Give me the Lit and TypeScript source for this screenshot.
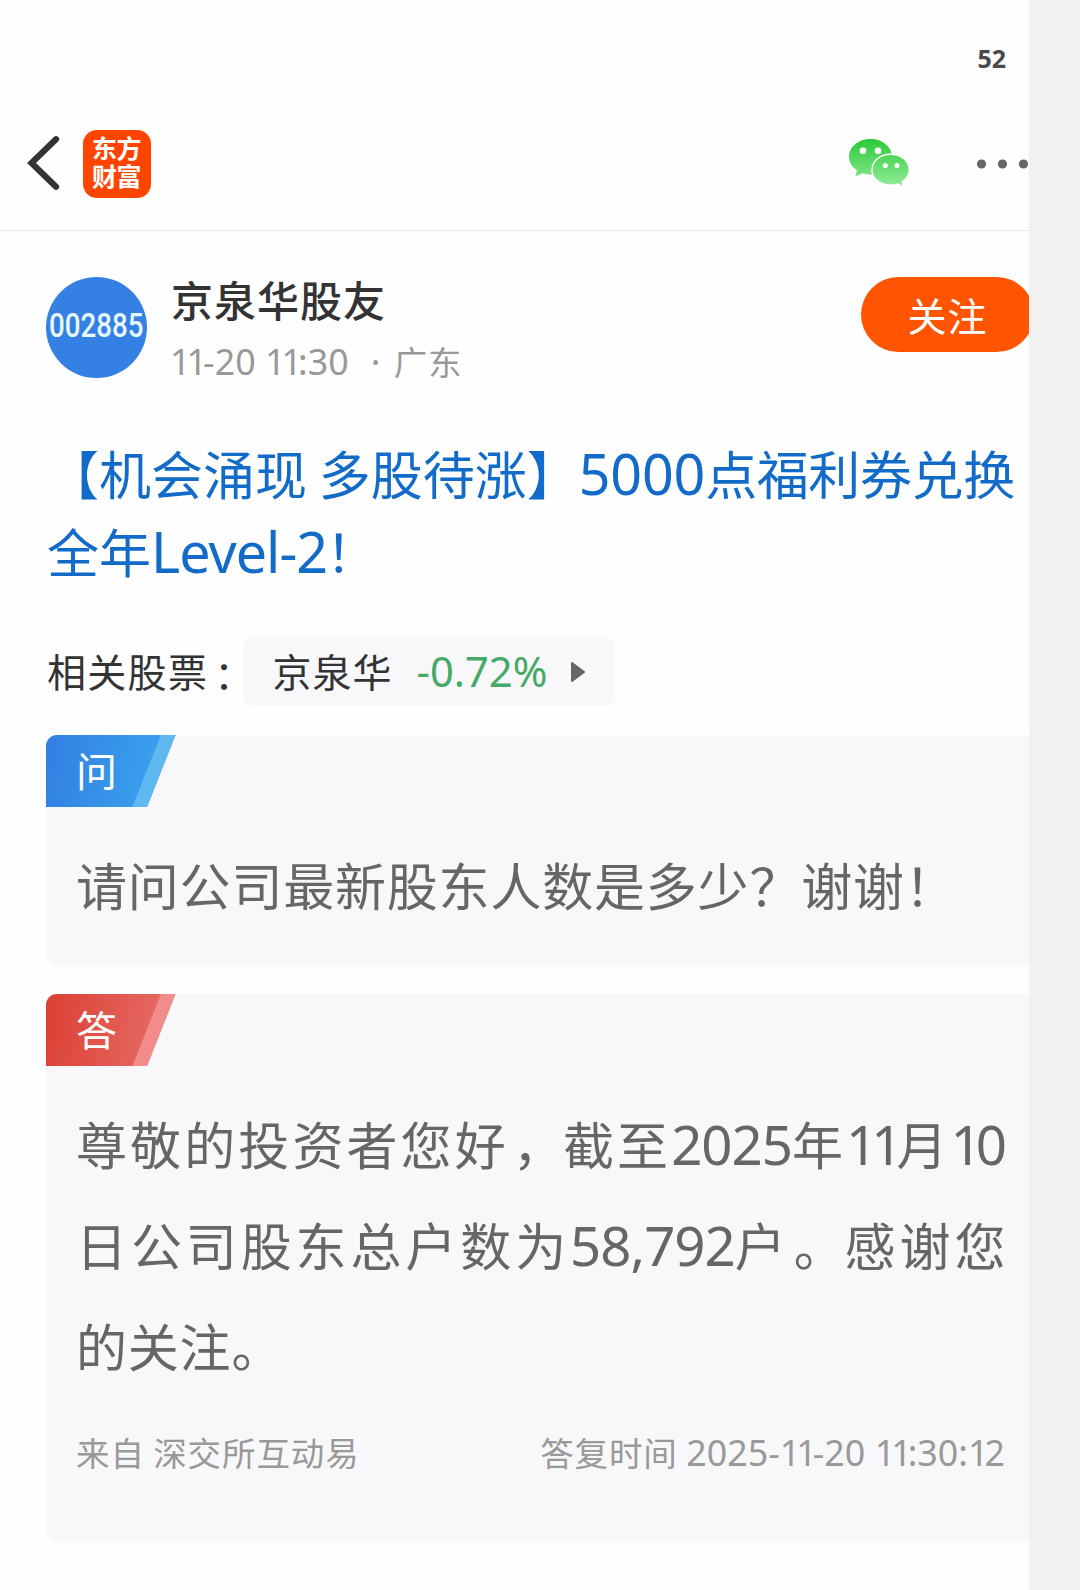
import { LitElement, html, css } from "lit";
import { customElement, property } from "lit/decorators.js";

const base = css`
  :host { display: block; font-family: "Noto Sans CJK SC", sans-serif; }
  * { box-sizing: border-box; }
  .n { font-family: "Noto Sans", sans-serif; font-size: 1.07em; line-height: 0; }
  .one { letter-spacing: -.11em; }
`;

/* Latin run in which the digit 1 is set narrower than the other figures. */
const num = (text: string, cls = "") =>
  html`<span class="n ${cls}">${text.split(/(1+)/).map((p) => (p.startsWith("1") ? html`<span class="one">${p}</span>` : p))}</span>`;

@customElement("nav-bar")
class NavBar extends LitElement {
  static styles = [base, css`
    .bar { display: flex; align-items: center; height: 135px; padding-top: 1px; border-bottom: 1px solid #e9e9e9; }
    .back { width: 34px; height: 56px; margin: -1px 0 0 25.500px; }
    .logo { width: 68px; height: 68px; margin: 0 0 0 23.500px; border-radius: 14px; background: #ff4400; color: #fff;
      font-size: 25px; font-weight: 700; line-height: 28.5px; letter-spacing: -0.5px; padding: 3px 0 0 9px; }
    .wechat { width: 62px; height: 50px; margin: -1px 0 0 697px; }
    .more { width: 54px; height: 12px; margin: 0 0 0 66px; flex: none; }
    svg, .logo { flex: none; display: block; }
  `];
  render() {
    return html`<div class="bar">
      <svg class="back" viewBox="26 135 34 56"><path d="M56 139.200 L31.500 163 L56 186.800" fill="none" stroke="#333" stroke-width="6.200" stroke-linecap="round" stroke-linejoin="miter"/></svg>
      <div class="logo">东方<br>财富</div>
      <svg class="wechat" viewBox="848 138 62 50">
        <defs><linearGradient id="g" gradientUnits="userSpaceOnUse" x1="0" y1="139" x2="0" y2="187"><stop offset="0" stop-color="#2bc937"/><stop offset="1" stop-color="#94ec9b"/></linearGradient></defs>
        <path fill="url(#g)" d="M870.5 139C858.500 139 849 146.800 849 156.700C849 162.200 852 167 857 170.300L855.300 176.500L863 173.200C865.400 174 868 174.400 870.500 174.400C882.400 174.400 892 166.600 892 156.700C892 146.800 882.400 139 870.500 139Z"/>
        <path fill="url(#g)" stroke="#fff" stroke-width="1.400" d="M890.600 154.300C880.100 154.300 872 161.100 872 169.700C872 178.300 880.100 185.100 890.600 185.100C893 185.100 895.200 184.800 897.300 184.100L903.600 187.200L902.200 181.700C906.600 178.900 909.200 174.600 909.200 169.700C909.200 161.100 901.100 154.300 890.600 154.300Z"/>
        <g fill="#fff"><circle cx="863" cy="150.800" r="3.300"/><circle cx="878" cy="150.800" r="3.300"/><circle cx="885.300" cy="165.400" r="2.500"/><circle cx="897" cy="165.400" r="2.500"/></g>
      </svg>
      <svg class="more" viewBox="976 157.500 54 12"><g fill="#666"><circle cx="981.500" cy="163.500" r="4.600"/><circle cx="1002.500" cy="163.500" r="4.600"/><circle cx="1023.500" cy="163.500" r="4.600"/></g></svg>
    </div>`;
  }
}

@customElement("author-row")
class AuthorRow extends LitElement {
  static styles = [base, css`
    .row { display: flex; align-items: flex-start; height: 101px; }
    .avatar { flex: none; width: 101px; height: 101px; border-radius: 50%; background: #3581e3; color: #e8f9ff; display: flex;
      justify-content: center; font: 500 33px/98px Roboto, sans-serif; white-space: nowrap; }
    .code { transform: scaleX(.84); }
    .who { margin-left: 24px; flex: 1; display: flex; flex-direction: column; gap: 20px; }
    .name { font-size: 42px; line-height: 43px; letter-spacing: 1px; font-weight: 500; color: #333; }
    .meta { font-size: 33.500px; line-height: 42px; color: #999; white-space: nowrap; }
    .meta .n { margin-left: -1px; }
    .meta .dot { display: inline-block; margin-left: 22px; width: 23px; }
    .place { letter-spacing: .8px; }
    .follow { flex: none; width: 173px; height: 75px; border-radius: 38px; background: #ff5500; color: #fff;
      font-size: 39px; line-height: 74px; letter-spacing: 1px; text-align: center; }
  `];
  render() {
    return html`<div class="row">
      <div class="avatar"><span class="code">002885</span></div>
      <div class="who">
        <div class="name">京泉华股友</div>
        <div class="meta">${num("11-20 11:30")}<span class="n dot">·</span><span class="place">广东</span></div>
      </div>
      <div class="follow">关注</div>
    </div>`;
  }
}

@customElement("qa-card")
class QaCard extends LitElement {
  @property() kind = "ask";
  @property() label = "";
  static styles = [base, css`
    .card { background: #f8f8fa; border-radius: 11px; overflow: hidden; }
    .ask { height: 230px; }
    .answer { height: 547px; }
    .tab { width: 130px; height: 72px; padding-left: 30px; color: #fff; font-size: 41px; line-height: 68px;
      clip-path: polygon(0 0, 129.500px 0, 101px 72px, 0 72px); }
    .ask .tab { background: linear-gradient(111.600deg, transparent 0 72.300%, #5fb8f0 72.700%), linear-gradient(100deg, #327fe2, #3aa2ee 85%); }
    .answer .tab { background: linear-gradient(111.600deg, transparent 0 72.300%, #f28b8c 72.700%), linear-gradient(100deg, #dc3f32, #e66a64 85%); }
    .body { padding: 27px 0 0 30px; }
  `];
  render() {
    return html`<div class="card ${this.kind}"><div class="tab">${this.label}</div><div class="body"><slot></slot></div></div>`;
  }
}

@customElement("app-root")
class AppRoot extends LitElement {
  static styles = [base, css`
    .page { width: 1080px; height: 1590px; background: #f1f1f1; }
    .screen { width: 1029px; height: 1590px; background: #fefefe; overflow: hidden; }
    .status { height: 96px; padding: 41px 23px 0 0; text-align: right; font: 700 25px/34px "Noto Sans", sans-serif; color: #4a4a4a; }
    .content { width: 988px; margin-left: 46px; padding-top: 46px; }
    .title { margin: 56px 0 0 1px; font-size: 52px; line-height: 78px; color: #126bc8; white-space: nowrap; }
    .line { display: block; white-space: pre; text-spacing-trim: space-all; }
    .t1 { letter-spacing: -.2px; }
    .t2 { letter-spacing: -.4px; }
    .lv { letter-spacing: -1px; }
    .bang { margin-left: -1.500px; }
    .related { margin: 47px 0 29px; display: flex; align-items: flex-start; height: 69px; font-size: 39px; line-height: 66px; color: #333; white-space: nowrap; }
    .label { width: 197px; padding-left: 1px; letter-spacing: 1.300px; }
    .colon { padding-left: 6px; line-height: 0; vertical-align: -2px; }
    .chip { width: 372px; height: 69px; border-radius: 10px; background: #f8f8fa; padding-left: 29.500px; letter-spacing: 1px; display: flex; }
    .pct { color: #45a967; margin-left: 24px; letter-spacing: 0; }
    .tri { width: 16px; height: 22px; margin: 24px 0 0 23px; }
    .text { font-size: 51px; line-height: 101px; color: #666; white-space: nowrap; letter-spacing: .8px; }
    .l1 { letter-spacing: 3.100px; }
    .l2 { letter-spacing: 3.900px; }
    .nudge { padding-left: 4px; margin-right: -4px; }
    .d1 { letter-spacing: -1px; }
    .second { margin-top: 29px; }
    .foot { display: flex; justify-content: space-between; width: 929px; margin-top: 36px; font-size: 33.500px; line-height: 40px; color: #999; letter-spacing: .9px; white-space: pre; }
    .df { letter-spacing: 0; }
  `];
  render() {
    return html`<div class="page"><div class="screen">
      <div class="status">52</div>
      <nav-bar></nav-bar>
      <div class="content">
        <author-row></author-row>
        <div class="title"><span class="line">【机会涌现 多股待涨】<span class="n t1">5000</span><span class="t2">点福利券兑换</span></span><span class="line">全年<span class="n lv">Level-2</span><span class="bang">！</span></span></div>
        <div class="related">
          <div class="label">相关股票<span class="colon">：</span></div>
          <div class="chip"><div>京泉华<span class="n pct">-0.72%</span></div><svg class="tri" viewBox="0 0 16 22"><path d="M2 2 L14 11 L2 20 Z" fill="#666" stroke="#666" stroke-width="2" stroke-linejoin="round"/></svg></div>
        </div>
        <qa-card kind="ask" label="问"><div class="text"><span class="line">请问公司最新股东人数是多少？谢谢！</span></div></qa-card>
        <qa-card class="second" kind="answer" label="答">
          <div class="text">
            <span class="line l1">尊敬的投资者您好<span class="nudge">，</span>截至${num("2025", "d1")}年${num("11", "d1")}月${num("10", "d1")}</span>
            <span class="line l2">日公司股东总户数为${num("58,792", "d1")}户<span class="nudge">。</span>感谢您</span>
            <span class="line">的关注。</span>
          </div>
          <div class="foot"><span>来自 深交所互动易</span><span>答复时间 ${num("2025-11-20 11:30:12", "df")}</span></div>
        </qa-card>
      </div>
    </div></div>`;
  }
}
